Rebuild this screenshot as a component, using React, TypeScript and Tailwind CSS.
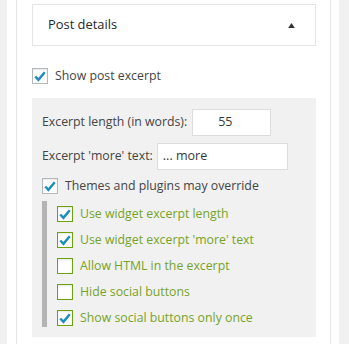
import type { ReactNode } from "react"

function Check({ checked, green }: { checked: boolean; green?: boolean }) {
  return (
    <span
      className={`flex h-4 w-4 shrink-0 items-center justify-center bg-white shadow-[inset_0_1px_2px_rgba(0,0,0,0.1)] ${
        green ? "border border-[#6aa30f]" : "border border-[#b4b9be]"
      }`}
    >
      {checked && (
        <svg viewBox="0 0 16 16" className="h-[15px] w-[15px]">
          <path d="M2.6 8 L6.2 11.8 L13.4 3.2" fill="none" stroke="#1e8cbe" strokeWidth="2.8" strokeLinejoin="miter" />
        </svg>
      )}
    </span>
  )
}

function Row({ checked, green, children }: { checked: boolean; green?: boolean; children: ReactNode }) {
  return (
    <label className="flex h-4 items-center gap-[7px]">
      <Check checked={checked} green={green} />
      <span className={green ? "text-[#76a327]" : "text-[#444]"}>{children}</span>
    </label>
  )
}

const nested = [
  { label: "Use widget excerpt length", checked: true },
  { label: "Use widget excerpt 'more' text", checked: true },
  { label: "Allow HTML in the excerpt", checked: false },
  { label: "Hide social buttons", checked: false },
  { label: "Show social buttons only once", checked: true },
]

export default function App() {
  return (
    <div className="flex h-[344px] w-[349px] overflow-hidden bg-[#f1f1f1] pl-[7px] text-[12.3px] text-[#444] font-['Open_Sans','Noto_Sans',sans-serif]">
      <div className="flex w-[332px] bg-white pl-[9px] pr-[8px]">
        <div className="w-[315px] border-x border-[#e5e5e5] pl-[15px] pr-[14px] pt-[4px]">
          {/* section header */}
          <div className="flex h-[42px] items-center justify-between border border-[#e5e5e5] pl-[15px] pr-[20px]">
            <span className="text-[12.9px] text-[#23282d]">Post details</span>
            <svg viewBox="0 0 8 6" className="h-[5px] w-[7px]">
              <path d="M4 0 L8 6 L0 6 Z" fill="#333" />
            </svg>
          </div>

          <div className="mt-[22px]">
            <Row checked>Show post excerpt</Row>
          </div>

          {/* excerpt options */}
          <div className="mt-[14px] bg-[#f1f1f1] pb-[10px] pl-[10px] pt-[11px]">
            <div className="flex items-center">
              <span>Excerpt length (in words):</span>
              <div className="ml-[5px] flex h-[27px] w-[79px] items-center border border-[#ddd] bg-white pl-[25px] text-[12.5px] text-[#32373c]">
                55
              </div>
            </div>
            <div className="mt-[7px] flex items-center">
              <span>Excerpt 'more' text:</span>
              <div className="ml-[4px] flex h-[27px] w-[131px] items-center border border-[#ddd] bg-white pl-[5px] text-[12.5px] text-[#32373c]">
                ... more
              </div>
            </div>
            <div className="mt-[8px]">
              <Row checked>Themes and plugins may override</Row>
            </div>
            <div className="mt-[7px] flex gap-[10px]">
              <div className="w-[5px] bg-[#b4b4b4]" />
              <div className="flex flex-col gap-[10px] pb-px pt-[5px]">
                {nested.map((n) => (
                  <Row key={n.label} checked={n.checked} green>
                    {n.label}
                  </Row>
                ))}
              </div>
            </div>
          </div>
        </div>
      </div>
    </div>
  )
}
